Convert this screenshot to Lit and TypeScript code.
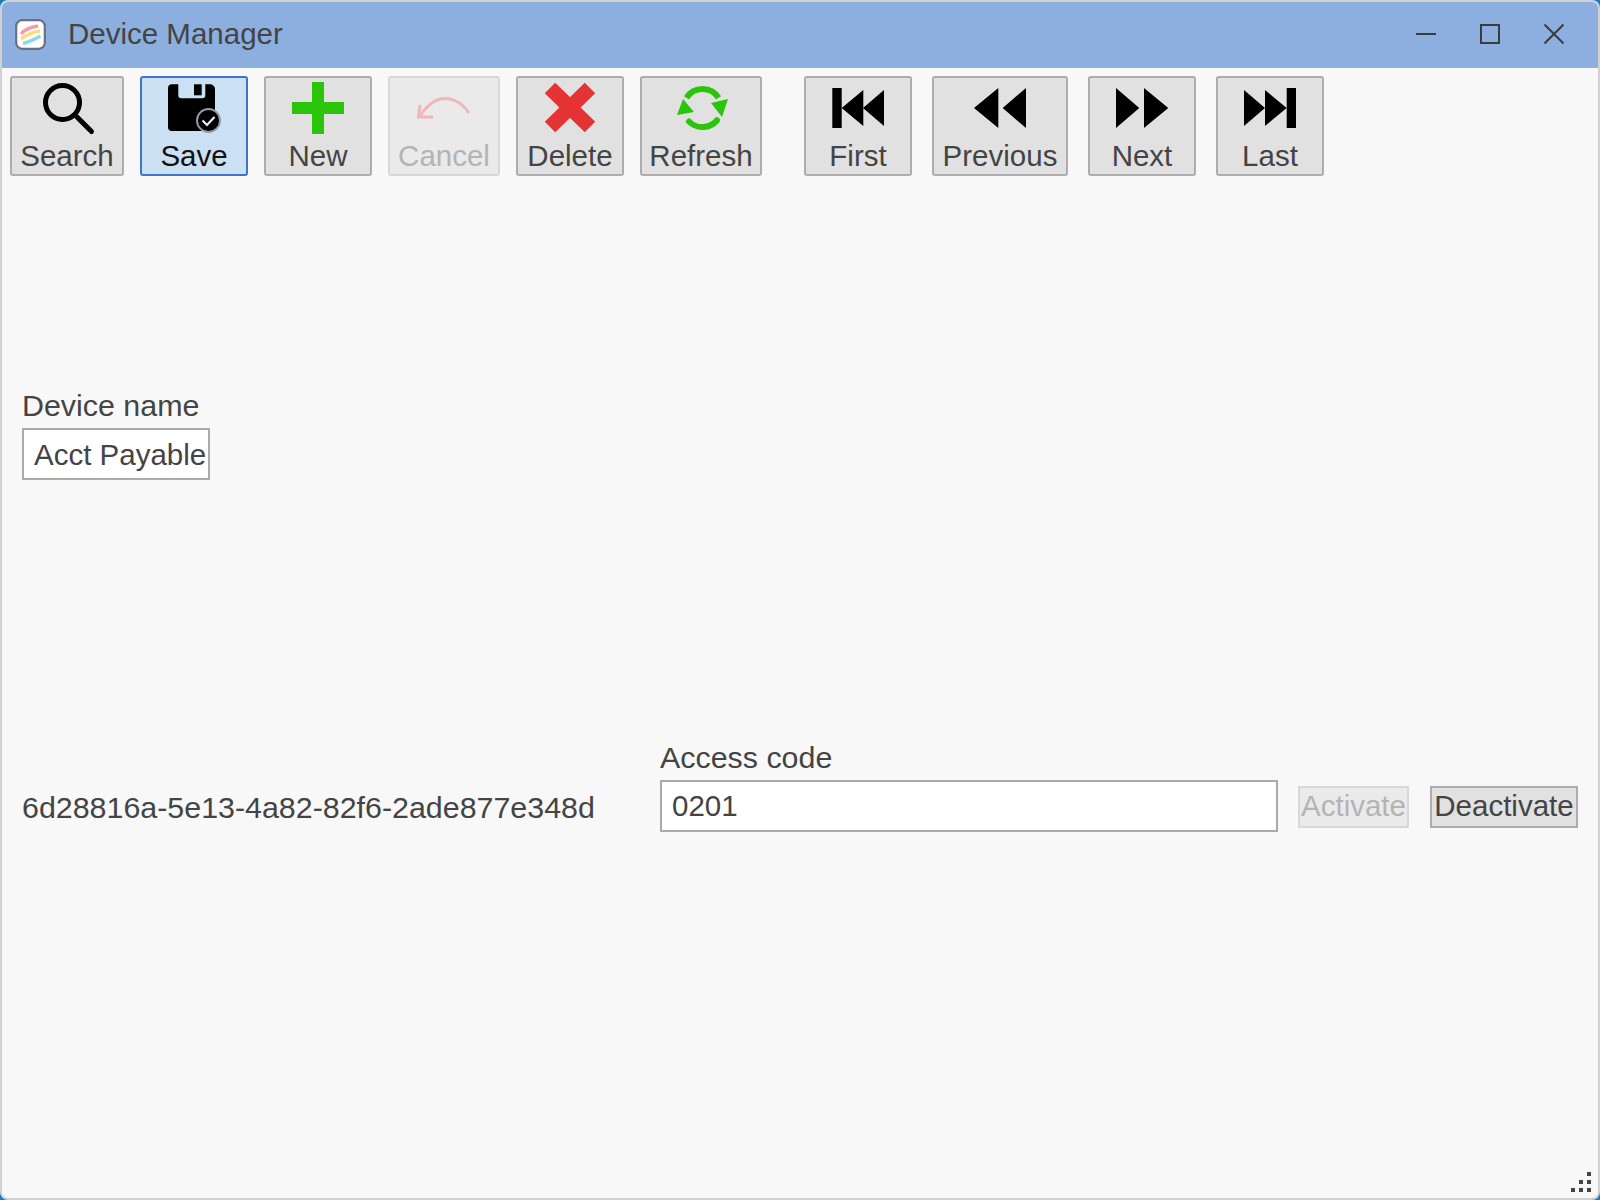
import { LitElement, html, css, svg } from "lit";
import { customElement } from "lit/decorators.js";

const tri = (p: string, fill = "#000") => svg`<polygon points=${p} fill=${fill}></polygon>`;

const icons: Record<string, unknown> = {
  search: svg`<circle cx="27.5" cy="24.5" r="17" fill="none" stroke="#000" stroke-width="5"></circle><line x1="40" y1="37" x2="56.5" y2="53.5" stroke="#000" stroke-width="5" stroke-linecap="round"></line>`,
  save: svg`<path fill="#000" d="M10 6.3h6.3v11a3 3 0 0 0 3 3h21a3 3 0 0 0 3-3v-11h4.7a5 5 0 0 1 5 5V49a4 4 0 0 1-4 4H10a4 4 0 0 1-4-4V10.3a4 4 0 0 1 4-4z"></path><rect x="32" y="6.3" width="7.7" height="11" fill="#000"></rect><circle cx="46.5" cy="42.5" r="11.5" fill="#000" stroke="#8f9bab" stroke-width="2"></circle><path d="M40.5 42.5l4.5 4.5 7.5-8" fill="none" stroke="#e8eef6" stroke-width="2.2"></path>`,
  plus: svg`<path fill="#2ac50a" d="M26 4h12v20h20v12H38v20H26V36H6V24h20z"></path>`,
  cancel: svg`<path d="M57 35C49 23 38 19 28 21 21 23 14 29 8 38" fill="none" stroke="#f3b6b6" stroke-width="3"></path><path d="M8 27l-1.5 12L21 39" fill="none" stroke="#f3b6b6" stroke-width="3"></path>`,
  del: svg`<path d="M12 10l40 39M52 10L12 49" fill="none" stroke="#e53333" stroke-width="15"></path>`,
  refresh: svg`<path d="M17.5 19.8A19 19 0 0 1 49.5 19.8" fill="none" stroke="#2ac50a" stroke-width="6"></path><path d="M48 42.3A19 19 0 0 1 20 43.5" fill="none" stroke="#2ac50a" stroke-width="6" stroke-linecap="round"></path>${tri("59,21 42,25 53,39", "#2ac50a")}${tri("8,37 25,34 14,21", "#2ac50a")}`,
  first: svg`<rect x="6.3" y="10" width="9.4" height="40"></rect>${tri("15.7,30 37.3,12 37.3,48")}${tri("37,30 58,12 58,48")}`,
  prev: svg`${tri("6,30 30.3,10 30.3,50")}${tri("34.7,30 58,10 58,50")}`,
  next: svg`${tri("6,10 29.3,30 6,50")}${tri("34,10 58.3,30 34,50")}`,
  last: svg`${tri("6,12 27,30 6,48")}${tri("27,12 48.7,30 27,48")}<rect x="48.7" y="10" width="9.3" height="40"></rect>`,
};

@customElement("app-root")
export class AppRoot extends LitElement {
  static styles = css`
    :host {
      display: block;
      width: 1600px;
      height: 1200px;
      background: #1a7cc4;
      font-family: "Liberation Sans", Arial, sans-serif;
      font-size: 29.5px;
      color: #444;
    }
    .window {
      position: relative;
      box-sizing: border-box;
      width: 100%;
      height: 100%;
      display: flex;
      flex-direction: column;
      background: #f8f8f8;
      border: 2px solid #d2d2d2;
      border-radius: 8px;
      overflow: hidden;
    }
    .titlebar {
      flex: none;
      height: 66px;
      background: #8cafdf;
      display: flex;
      align-items: center;
      padding-left: 13px;
    }
    .logo { width: 31px; height: 31px; flex: none; margin-top: -1px; }
    .title { margin-left: 22px; flex: 1; margin-top: -2px; }
    .winbtn { width: 20px; height: 20px; flex: none; margin-right: 44px; margin-top: -2px; display: block; }
    .winbtn:last-child { margin-right: 34px; }
    .toolbar {
      flex: none;
      display: flex;
      gap: 16px;
      padding: 8px 0 0 8px;
    }
    .nav { margin-left: 26px; display: flex; gap: 20px; }
    .tool {
      box-sizing: border-box;
      height: 100px;
      width: 108px;
      padding: 0;
      display: flex;
      flex-direction: column;
      align-items: center;
      background: #e1e1e1;
      border: 2px solid #adadad;
      border-radius: 3px;
      font: inherit;
      color: #444;
    }
    .tool svg { display: block; width: 64px; height: 60px; flex: none; }
    .tool span { display: block; line-height: 36px; white-space: nowrap; }
    .tool.w114 { width: 114px; }
    .tool.w112 { width: 112px; }
    .tool.w122 { width: 122px; }
    .tool.w136 { width: 136px; }
    .tool.focus { background: #cce0f4; border-color: #3f74cc; color: #111; }
    .tool.off { background: #eaeaea; border-color: #d8d8d8; color: #b4b4b4; }
    .form { flex: 1; display: flex; flex-direction: column; padding: 212px 0 0 20px; }
    .field { display: flex; flex-direction: column; }
    .field label { line-height: 34px; height: 40px; font-size: 30.4px; }
    .field input {
      box-sizing: border-box;
      display: block;
      height: 52px;
      border: 2px solid #aaaaaa;
      background: #fff;
      padding: 1px 0 0 10px;
      font: inherit;
      color: #444;
      outline: none;
      border-radius: 0;
    }
    .name input { width: 188px; }
    .row { display: flex; align-items: flex-start; margin-top: 260px; }
    .guid { width: 638px; flex: none; line-height: 34px; margin-top: 50px; font-size: 30.4px; }
    .field.code input { width: 618px; padding: 0 0 1px 10px; }
    .small {
      box-sizing: border-box;
      height: 42px;
      margin-top: 46px;
      padding: 0 0 3px;
      background: #e1e1e1;
      border: 2px solid #adadad;
      font: inherit;
      line-height: 34px;
      color: #444;
      white-space: nowrap;
    }
    .small.off { background: #eaeaea; border-color: #d8d8d8; color: #b4b4b4; margin-left: 20px; width: 111px; }
    .small.on { margin-left: 21px; width: 148px; }
    .grip { position: absolute; right: 5px; bottom: 4px; width: 24px; height: 24px; display: block; }
  `;

  private tool(label: string, icon: string, cls = "") {
    return html`<button class="tool ${cls}"><svg viewBox="0 0 64 60">${icons[icon]}</svg><span>${label}</span></button>`;
  }

  render() {
    return html`
      <div class="window">
        <div class="titlebar">
          <svg class="logo" viewBox="0 0 31 31">
            <rect x="1.2" y="1.2" width="28.6" height="28.6" rx="6" fill="#fff" stroke="#6b7080" stroke-width="2.2"></rect>
            <path d="M6 15C10 10 16 8 23 7" fill="none" stroke="#f79aa8" stroke-width="3.4"></path>
            <path d="M6 20C11 16 18 13 25 12" fill="none" stroke="#fbdc7c" stroke-width="3.4"></path>
            <path d="M8 24.5C14 23 20 20 25.5 17" fill="none" stroke="#8ad8f0" stroke-width="3.4"></path>
          </svg>
          <div class="title">Device Manager</div>
          <svg class="winbtn" viewBox="0 0 20 20"><rect x="0" y="9" width="20" height="2" fill="#3c3c3c"></rect></svg>
          <svg class="winbtn" viewBox="0 0 20 20"><rect x="1" y="1" width="18" height="18" fill="none" stroke="#3c3c3c" stroke-width="2"></rect></svg>
          <svg class="winbtn" viewBox="0 0 20 20"><path d="M0.5 0.5L19.5 19.5M19.5 0.5L0.5 19.5" stroke="#3c3c3c" stroke-width="2"></path></svg>
        </div>
        <div class="toolbar">
          ${this.tool("Search", "search", "w114")}
          ${this.tool("Save", "save", "focus")}
          ${this.tool("New", "plus")}
          ${this.tool("Cancel", "cancel", "off w112")}
          ${this.tool("Delete", "del")}
          ${this.tool("Refresh", "refresh", "w122")}
          <div class="nav">
            ${this.tool("First", "first")}
            ${this.tool("Previous", "prev", "w136")}
            ${this.tool("Next", "next")}
            ${this.tool("Last", "last")}
          </div>
        </div>
        <div class="form">
          <div class="field name">
            <label>Device name</label>
            <input readonly .value=${"Acct Payable"} />
          </div>
          <div class="row">
            <div class="guid">6d28816a-5e13-4a82-82f6-2ade877e348d</div>
            <div class="field code">
              <label>Access code</label>
              <input readonly .value=${"0201"} />
            </div>
            <button class="small off">Activate</button>
            <button class="small on">Deactivate</button>
          </div>
        </div>
        <svg class="grip" viewBox="0 0 24 24" fill="#444">
          <rect x="18" y="2" width="4" height="4"></rect>
          <rect x="10" y="10" width="4" height="4"></rect><rect x="18" y="10" width="4" height="4"></rect>
          <rect x="2" y="18" width="4" height="4"></rect><rect x="10" y="18" width="4" height="4"></rect><rect x="18" y="18" width="4" height="4"></rect>
        </svg>
      </div>
    `;
  }
}
